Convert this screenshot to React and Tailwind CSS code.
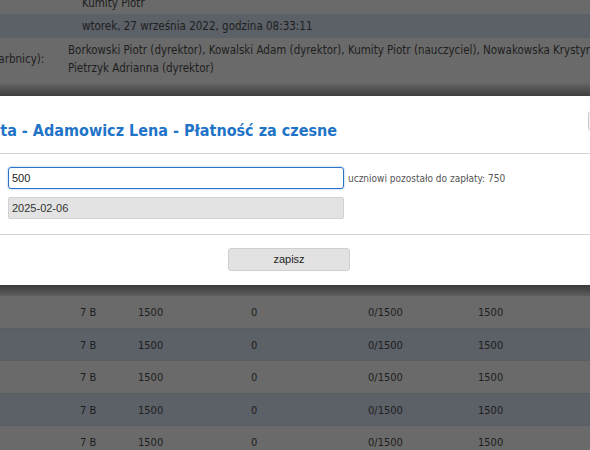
import React from 'react';

const rows = [0, 1, 2, 3, 4];

export default function App() {
  return (
    <div className="w-[590px] h-[450px] overflow-hidden bg-[#6a6a6a] text-[11px] text-[#1e1e1e] font-['DejaVu_Sans_Condensed','DejaVu_Sans',sans-serif]">
      {/* Dimmed page behind the dialog */}
      <div className="h-[14px] bg-[#6a6a6a] overflow-hidden text-[11.5px]">
        <div className="pl-[82px] -mt-[6px] leading-[18px]">Kumity Piotr</div>
      </div>
      <div className="h-[24px] bg-[#5c6067] flex items-center pl-[82px] pt-[1px] text-[11.5px]">
        wtorek, 27 września 2022, godzina 08:33:11
      </div>
      <div className="h-[45px] bg-[#6a6a6a] flex pt-[3px] text-[11.5px]">
        <div className="w-[82px] -ml-[14px] pt-[10px] shrink-0 whitespace-nowrap">Skarbnicy):</div>
        <div className="leading-[18px] whitespace-nowrap">
          <div>Borkowski Piotr (dyrektor), Kowalski Adam (dyrektor), Kumity Piotr (nauczyciel), Nowakowska Krystyna</div>
          <div>Pietrzyk Adrianna (dyrektor)</div>
        </div>
      </div>
      <div className="h-[13px] bg-gradient-to-b from-[#666666] to-[#3e3e3e]" />

      {/* Dialog */}
      <div className="h-[189px] bg-white flex flex-col">
        <div className="h-[58px] border-b border-[#d4d4d4] flex items-start justify-between">
          <div className="-ml-[41px] pt-[25px] text-[16px] leading-[20px] font-bold text-[#1f74c7] whitespace-nowrap">
            Wpłata - Adamowicz Lena - Płatność za czesne
          </div>
          <div className="w-[20px] h-[20px] -mr-[18px] mt-[15px] border border-[#c8c8c8] rounded-[3px] bg-[#f4f4f4]" />
        </div>
        <div className="h-[81px] border-b border-[#d4d4d4] pl-[8px] pt-[13px]">
          <div className="flex items-center">
            <div className="w-[336px] h-[22px] border border-[#2b73c9] rounded-[3px] px-[3px] flex items-center text-[11px] text-[#222] font-['Liberation_Sans',Arial,sans-serif] shadow-[0_0_2px_#7fb1e6]">
              500
            </div>
            <span className="ml-[4px] text-[10px] text-[#555]">uczniowi pozostało do zapłaty: 750</span>
          </div>
          <div className="mt-[8px] w-[336px] h-[22px] border border-[#d2d2d2] rounded-[2px] bg-[#e3e3e3] px-[3px] flex items-center text-[11px] text-[#333] font-['Liberation_Sans',Arial,sans-serif]">
            2025-02-06
          </div>
        </div>
        <div className="flex-1 flex justify-center pt-[13px]">
          <div className="-ml-[12px] w-[122px] h-[23px] border border-[#cfcfcf] rounded-[3px] bg-[#e2e2e2] flex items-center justify-center text-[11px] text-[#222] font-['Liberation_Sans',Arial,sans-serif]">
            zapisz
          </div>
        </div>
      </div>
      <div className="h-[11px] bg-gradient-to-b from-[#3a3a3a] to-[#5e5e5e]" />

      {/* Dimmed table rows */}
      {rows.map((r) => (
        <div
          key={r}
          className={`h-[32.5px] flex items-center pt-[3px] border-b border-[#5a5d62] ${r % 2 === 0 ? 'bg-[#6a6a6a]' : 'bg-[#5c6067]'}`}
        >
          <div className="w-[80px]" />
          <div className="w-[58px]">7 B</div>
          <div className="w-[113px]">1500</div>
          <div className="w-[117px]">0</div>
          <div className="w-[110px]">0/1500</div>
          <div>1500</div>
        </div>
      ))}
    </div>
  );
}
